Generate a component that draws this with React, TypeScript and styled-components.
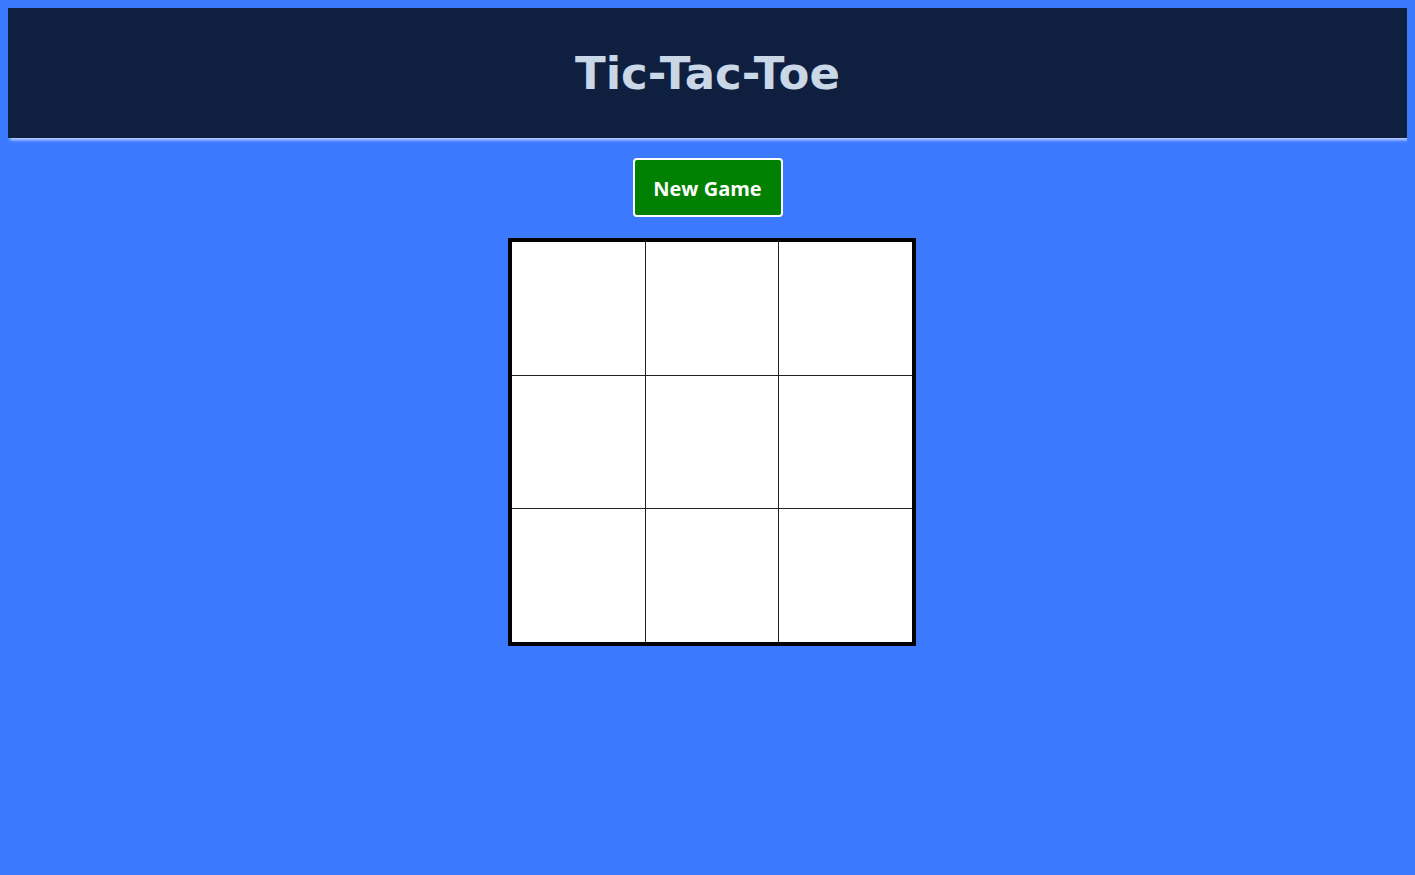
import React from "react";
import styled, { createGlobalStyle } from "styled-components";

const Global = createGlobalStyle`
  html, body {
    background: #3b7aff;
  }
  body {
    margin: 8px;
    font-family: "Open Sans", "DejaVu Sans", sans-serif;
  }
`;

const Header = styled.header`
  background: #0f1f3f;
  height: 130px;
  display: flex;
  align-items: center;
  justify-content: center;
  box-shadow: 2px 2px 3px rgba(220, 230, 255, 0.85);
`;

const Title = styled.h1`
  margin: 0;
  font-family: "DejaVu Sans", sans-serif;
  font-weight: bold;
  font-size: 45px;
  color: #c9d7e6;
  line-height: 1;
`;

const Main = styled.main`
  display: flex;
  flex-direction: column;
  align-items: center;
  padding-top: 20px;
`;

const Button = styled.button`
  background: #008000;
  color: #fff;
  border: 2px solid #fff;
  border-radius: 4px;
  font-family: "Open Sans", sans-serif;
  font-weight: 700;
  font-size: 20px;
  padding: 15px 0 13px;
  line-height: 27px;
  cursor: pointer;
  width: 150px;
  height: 59px;
`;

const Board = styled.div`
  margin-top: 21px;
  margin-left: 9px;
  width: 400px;
  height: 400px;
  border: 4px solid #000;
  background: #222;
  display: grid;
  grid-template-columns: repeat(3, 1fr);
  grid-template-rows: repeat(3, 1fr);
  gap: 1px;
`;

const Cell = styled.div`
  background: #fff;
`;

export default function App() {
  return (
    <>
      <Global />
      <Header>
        <Title>Tic-Tac-Toe</Title>
      </Header>
      <Main>
        <Button>New Game</Button>
        <Board>
          {Array.from({ length: 9 }).map((_, i) => (
            <Cell key={i} />
          ))}
        </Board>
      </Main>
    </>
  );
}
